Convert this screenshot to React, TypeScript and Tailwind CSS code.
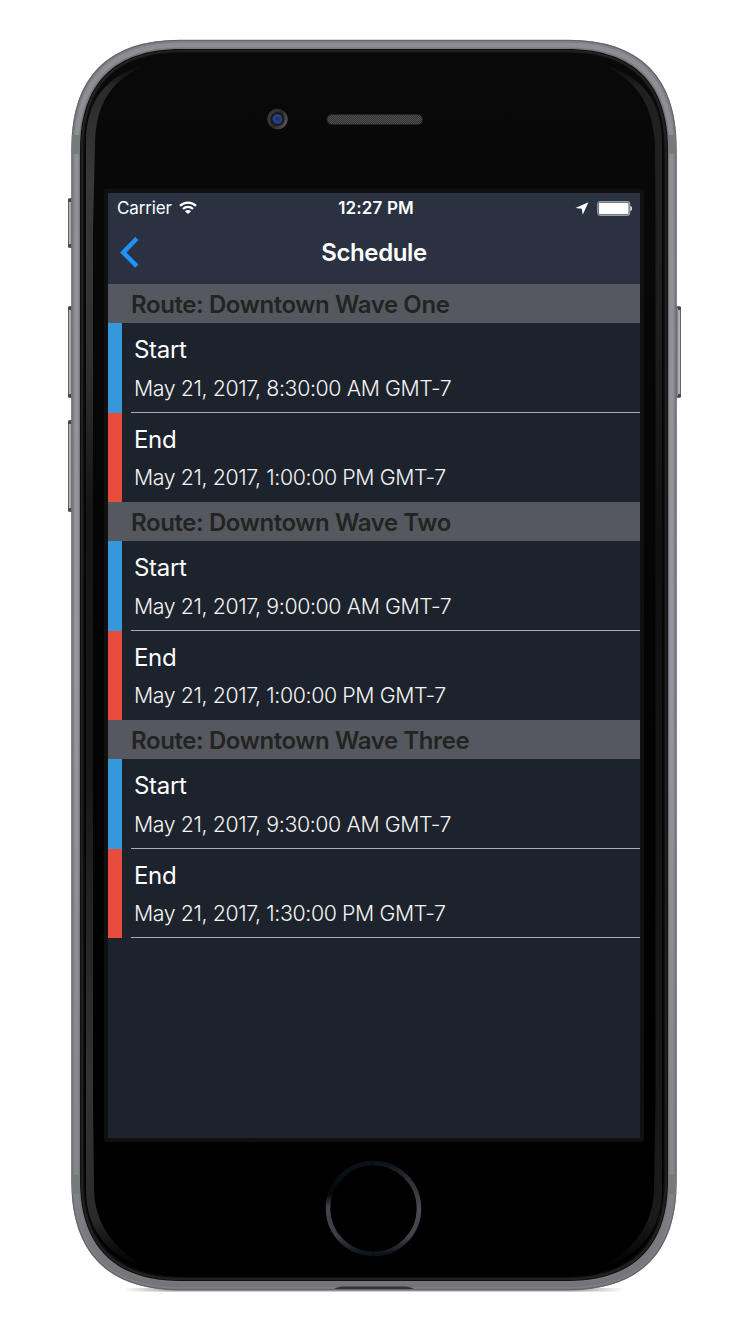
import React from "react";

const routes = [
  { name: "Route: Downtown Wave One", start: "May 21, 2017, 8:30:00 AM GMT-7", end: "May 21, 2017, 1:00:00 PM GMT-7" },
  { name: "Route: Downtown Wave Two", start: "May 21, 2017, 9:00:00 AM GMT-7", end: "May 21, 2017, 1:00:00 PM GMT-7" },
  { name: "Route: Downtown Wave Three", start: "May 21, 2017, 9:30:00 AM GMT-7", end: "May 21, 2017, 1:30:00 PM GMT-7" },
];

// Smooth-cornered outline of the phone: left, top, right, bottom, corner reach.
function outline(l: number, t: number, r: number, b: number, c: number) {
  const k = c * 0.34;
  return `M${l} ${t + c}C${l} ${t + k} ${l + k} ${t} ${l + c} ${t}H${r - c}C${r - k} ${t} ${r} ${t + k} ${r} ${t + c}V${b - c}C${r} ${b - k} ${r - k} ${b} ${r - c} ${b}H${l + c}C${l + k} ${b} ${l} ${b - k} ${l} ${b - c}Z`;
}

function SideButton({ x, y, h }: { x: number; y: number; h: number }) {
  return (
    <g>
      <rect x={x} y={y} width="6" height={h} rx="1.5" fill="#63656a" />
      <rect x={x + 1.2} y={y + 4} width="1.6" height={h - 8} fill="#c4c5c9" />
      <rect x={x + 2.8} y={y + 2} width="1.2" height={h - 4} fill="#85878c" />
      <rect x={x} y={y + 1} width="3" height="3" fill="#46484d" />
      <rect x={x} y={y + h - 4} width="3" height="3" fill="#46484d" />
    </g>
  );
}

function PhoneBody() {
  return (
    <svg className="absolute inset-0" width="750" height="1334" viewBox="0 0 750 1334" aria-hidden="true">
      <defs>
        <linearGradient id="metal" x1="0" y1="0" x2="0" y2="1">
          <stop offset="0" stopColor="#8d8d94" />
          <stop offset="0.5" stopColor="#96979e" />
          <stop offset="0.9" stopColor="#85868c" />
          <stop offset="1" stopColor="#737479" />
        </linearGradient>
        <linearGradient id="glass" x1="0" y1="0" x2="0" y2="1">
          <stop offset="0" stopColor="#090909" />
          <stop offset="0.5" stopColor="#040404" />
          <stop offset="0.9" stopColor="#000000" />
        </linearGradient>
        <linearGradient id="shineL" gradientUnits="userSpaceOnUse" x1="0" y1="64" x2="0" y2="1268">
          <stop offset="0" stopColor="#2a2a2a" stopOpacity="0" />
          <stop offset="0.02" stopColor="#2a2a2a" />
          <stop offset="0.1" stopColor="#393939" />
          <stop offset="0.25" stopColor="#303030" />
          <stop offset="0.37" stopColor="#151515" />
          <stop offset="0.6" stopColor="#181818" />
          <stop offset="0.85" stopColor="#343434" />
          <stop offset="0.96" stopColor="#2a2a2a" />
          <stop offset="1" stopColor="#1c1c1c" stopOpacity="0" />
        </linearGradient>
        <linearGradient id="shineR" gradientUnits="userSpaceOnUse" x1="0" y1="64" x2="0" y2="1268">
          <stop offset="0" stopColor="#222222" stopOpacity="0" />
          <stop offset="0.02" stopColor="#212121" />
          <stop offset="0.2" stopColor="#1f1f1f" />
          <stop offset="0.4" stopColor="#101010" />
          <stop offset="0.85" stopColor="#181818" />
          <stop offset="0.96" stopColor="#1b1b1b" />
          <stop offset="1" stopColor="#181818" stopOpacity="0" />
        </linearGradient>
        <linearGradient id="homeL" gradientUnits="userSpaceOnUse" x1="0" y1="1162" x2="0" y2="1255">
          <stop offset="0" stopColor="#0b1116" />
          <stop offset="0.35" stopColor="#04080b" />
          <stop offset="0.48" stopColor="#44444c" />
          <stop offset="0.8" stopColor="#3c3e45" />
          <stop offset="1" stopColor="#0a1016" />
        </linearGradient>
        <linearGradient id="homeR" gradientUnits="userSpaceOnUse" x1="0" y1="1162" x2="0" y2="1255">
          <stop offset="0" stopColor="#0b1116" />
          <stop offset="0.2" stopColor="#2d3036" />
          <stop offset="0.5" stopColor="#4a4a51" />
          <stop offset="0.8" stopColor="#41434a" />
          <stop offset="1" stopColor="#0a1016" />
        </linearGradient>
        <linearGradient id="shadow" x1="0" y1="0" x2="1" y2="0">
          <stop offset="0" stopColor="#777777" stopOpacity="0" />
          <stop offset="0.1" stopColor="#777777" stopOpacity="0.7" />
          <stop offset="0.9" stopColor="#777777" stopOpacity="0.7" />
          <stop offset="1" stopColor="#777777" stopOpacity="0" />
        </linearGradient>
        <linearGradient id="lens" x1="0" y1="0.3" x2="1" y2="0.8">
          <stop offset="0" stopColor="#3c3c3c" />
          <stop offset="0.5" stopColor="#2a2a2a" />
          <stop offset="1" stopColor="#5e5e5e" />
        </linearGradient>
        <radialGradient id="iris">
          <stop offset="0" stopColor="#1a2858" />
          <stop offset="0.3" stopColor="#20346c" />
          <stop offset="0.7" stopColor="#2c4788" />
          <stop offset="1" stopColor="#121c3c" />
        </radialGradient>
        <pattern id="mesh" width="2" height="2" patternUnits="userSpaceOnUse">
          <rect width="2" height="2" fill="#313131" />
          <rect width="1" height="1" fill="#505050" />
          <rect x="1" y="1" width="1" height="1" fill="#505050" />
        </pattern>
      </defs>
      <rect x="124" y="1288" width="500" height="3.5" rx="1.7" fill="url(#shadow)" />
      <SideButton x={68} y={198} h={50} />
      <SideButton x={68} y={306} h={92} />
      <SideButton x={68} y={420} h={92} />
      <g transform="translate(749 0) scale(-1 1)">
        <SideButton x={68} y={306} h={92} />
      </g>
      <path d={outline(71.5, 40, 676.5, 1290, 108)} fill="url(#metal)" />
      <path d={outline(72, 40.5, 676, 1289.5, 108)} fill="none" stroke="#66676c" strokeWidth="1.4" />
      <path d={outline(73.5, 42, 674.5, 1288, 106.5)} fill="none" stroke="#7f8086" strokeWidth="1.6" />
      <path d={outline(79.4, 48.2, 668.6, 1281.8, 101)} fill="none" stroke="#77787d" strokeWidth="1.6" />
      <g fill="#747b7a">
        <rect x="72" y="135" width="8" height="19" />
        <rect x="668" y="135" width="8" height="19" />
        <rect x="72" y="1175" width="8" height="19" />
        <rect x="668" y="1175" width="8" height="19" />
      </g>
      <path d="M334 1289c4-3 9-2.500 15-2.500h50c6 0 11 0 15 2.500z" fill="#333336" />
      <path d={outline(80, 49, 668, 1281, 101)} fill="#0a0a0a" />
      <path d={outline(82, 51, 666, 1279, 99)} fill="none" stroke="#202020" strokeWidth="2.6" />
      <path d={outline(84.5, 54, 663.5, 1276.5, 98)} fill="url(#glass)" />
      <path d="M148 64C105 75 86 101 86 143V1190C86 1229 107 1257 147 1268C112 1248 95 1223 94 1190L93 1100V230L95 143C96 102 113 78 148 64Z" fill="url(#shineL)" />
      <path d="M600 64C643 75 662 101 662 143V1190C662 1229 641 1257 601 1268C636 1248 653 1223 654 1190L655.500 1100V230L655 143C652 102 635 78 600 64Z" fill="url(#shineR)" />
      <rect x="104" y="188.500" width="540" height="953.500" rx="3" fill="#101010" />
      <circle cx="277.500" cy="119" r="10.300" fill="url(#lens)" />
      <circle cx="277.500" cy="119" r="7" fill="#191919" />
      <circle cx="277.500" cy="119" r="5.500" fill="url(#iris)" />
      <rect x="326.500" y="114" width="96.500" height="11" rx="5.500" fill="#242424" />
      <rect x="327.500" y="115" width="94.500" height="9" rx="4.500" fill="url(#mesh)" />
      <path d="M373.500 1163A45.500 45.500 0 0 0 373.500 1254" fill="none" stroke="url(#homeL)" strokeWidth="4.500" />
      <path d="M373.500 1163A45.500 45.500 0 0 1 373.500 1254" fill="none" stroke="url(#homeR)" strokeWidth="4.500" />
    </svg>
  );
}

function StatusBar() {
  return (
    <div className="grid h-[30px] grid-cols-3 items-center pl-[9px] pr-2 text-[17px] leading-none">
      <div className="flex items-center gap-[7px]">
        <span className="pt-px tracking-[-0.15px]">Carrier</span>
        <svg width="18" height="14" viewBox="0 0 18 14" fill="none" stroke="#ffffff" strokeWidth="2.200">
          <path d="M1 4.900A11.500 11.500 0 0 1 17 4.900" />
          <path d="M4 8A7 7 0 0 1 14 8" />
          <path d="M9 13L5.900 10.200A4.400 4.400 0 0 1 12.100 10.200Z" fill="#ffffff" stroke="none" />
        </svg>
      </div>
      <span className="pl-[3px] pt-px text-center font-semibold tracking-[0.15px]">12:27 PM</span>
      <div className="flex items-center justify-end gap-2">
        <svg width="14" height="13" viewBox="0 0 14 13" fill="#ffffff">
          <path d="M13.400 0.200L7.700 12.700L6.800 6.800L0.400 6.100Z" />
        </svg>
        <svg width="35" height="15" viewBox="0 0 35 15">
          <rect x="0.700" y="0.700" width="32" height="13.600" rx="2.500" fill="none" stroke="#989ea8" strokeWidth="1.200" />
          <rect x="1.800" y="1.800" width="29.800" height="11.400" rx="1.200" fill="#ffffff" />
          <path d="M33.400 5C35.400 5.300 35.400 9.700 33.400 10Z" fill="#ffffff" />
        </svg>
      </div>
    </div>
  );
}

function NavBar() {
  return (
    <div className="grid h-[60.9px] grid-cols-3 items-center">
      <svg className="mb-[2px] ml-3" width="20" height="32" viewBox="0 0 20 32" fill="none" stroke="#1e93fb" strokeWidth="4.600">
        <path d="M16.800 2.500L3.300 16.500L16.800 30.200" />
      </svg>
      <h1 className="text-center text-[24px] font-semibold leading-none tracking-[-0.4px]">Schedule</h1>
    </div>
  );
}

function EventRow({ kind, time, line }: { kind: "Start" | "End"; time: string; line: boolean }) {
  const start = kind === "Start";
  return (
    <div className="flex h-[89.35px]">
      <div className={start ? "w-[14.400px] bg-[#3498db]" : "w-[14.400px] bg-[#e74c3c]"} />
      <div className={line ? "ml-[8.600px] flex-1 border-b border-[#a8abb0] pl-[3px]" : "ml-[8.600px] flex-1 pl-[3px]"}>
        <div className="pt-[12px] text-[24px] leading-[30px] tracking-[-0.3px]">{kind}</div>
        <div className="pt-[8.600px] text-[21.300px] font-light leading-[28px] tracking-[-0.380px] text-[#f4f4f4]">{time}</div>
      </div>
    </div>
  );
}

export default function App() {
  return (
    <div className="relative h-[1334px] w-[750px] overflow-hidden bg-white">
      <PhoneBody />
      <main className="relative ml-[108px] flex w-[532px] flex-col pt-[193px] font-['Inter',sans-serif] text-white">
        <header className="bg-[#2a3241]">
          <StatusBar />
          <NavBar />
        </header>
        <div className="h-[854.1px] bg-[#1d232c]">
          {routes.map((route, i) => (
            <section key={route.name}>
              <h2 className="h-[39.4px] bg-[#55595f] pl-[23px] text-[24px] font-semibold leading-[41px] tracking-[-0.410px] text-[#232323]">{route.name}</h2>
              <EventRow kind="Start" time={route.start} line />
              <EventRow kind="End" time={route.end} line={i === routes.length - 1} />
            </section>
          ))}
        </div>
      </main>
    </div>
  );
}
